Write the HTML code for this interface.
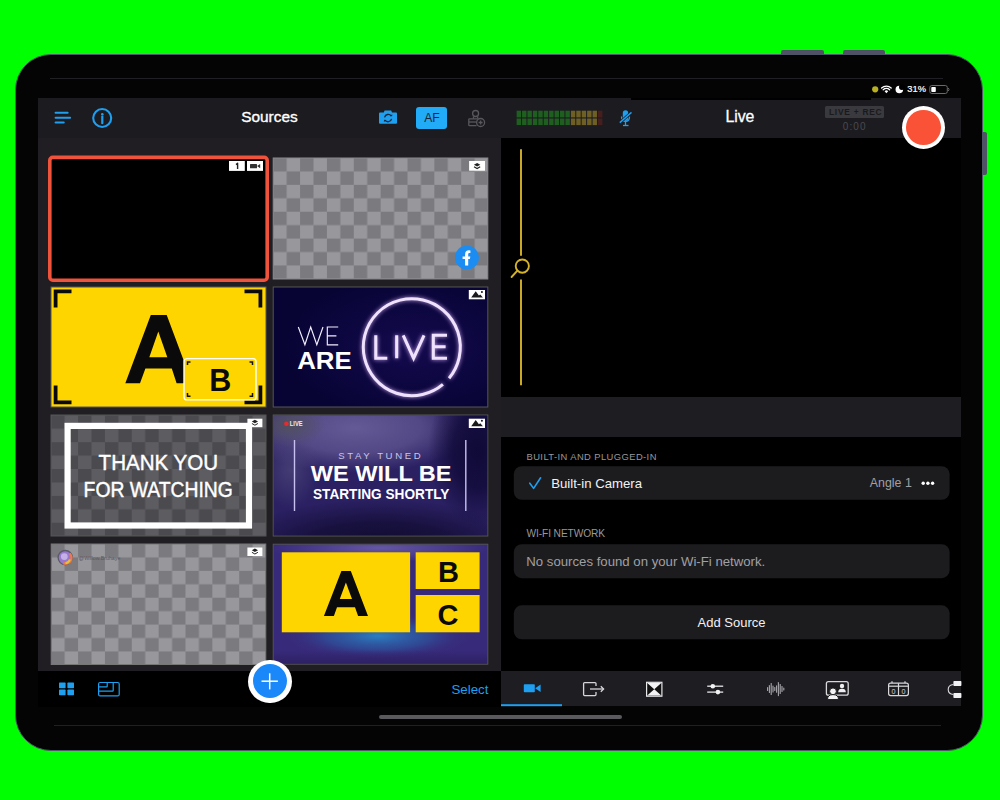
<!DOCTYPE html>
<html><head><meta charset="utf-8">
<style>
*{box-sizing:border-box;margin:0;padding:0}
html,body{width:1000px;height:800px;overflow:hidden;background:#00ff00;font-family:"Liberation Sans",sans-serif}
.a{position:absolute}
#dev{left:15px;top:54px;width:968px;height:697px;border-radius:36px;background:#040404;border:1.7px solid #52566a}
.btn{background:#4e5264}
.scrline{height:1px;background:#202024}
#hdrL{left:38px;top:98px;width:463px;height:40px;background:#1c1b20}
#hdrR{left:501px;top:98px;width:460px;height:40px;background:#1c1b20}
#gridbg{left:38px;top:138px;width:463px;height:533px;background:#201e23}
#tbL{left:38px;top:671px;width:463px;height:36px;background:#000}
#tbR{left:501px;top:671px;width:460px;height:35px;background:#1e1d22}
#prev{left:501px;top:138px;width:460px;height:259px;background:#000}
#band{left:501px;top:397px;width:460px;height:40px;background:#1e1d22}
#list{left:501px;top:437px;width:460px;height:234px;background:#000}
.cell{position:absolute;width:215px;height:121px;overflow:hidden;border:1px solid #555}
.chk{background-color:#7b7b7d;background-image:linear-gradient(45deg,#9a9a9c 25%,transparent 25%,transparent 75%,#9a9a9c 75%),linear-gradient(45deg,#9a9a9c 25%,transparent 25%,transparent 75%,#9a9a9c 75%);background-size:26.8px 26.8px;background-position:0 0,13.4px 13.4px}
.badge{position:absolute;background:#fff;height:9px;border-radius:1px}
.t{position:absolute;white-space:nowrap;line-height:1}
</style></head><body>
<div id="dev" class="a"></div>
<div class="a btn" style="left:781px;top:50px;width:43px;height:5px;border-radius:2px 2px 0 0"></div>
<div class="a btn" style="left:843px;top:50px;width:42px;height:5px;border-radius:2px 2px 0 0"></div>
<div class="a btn" style="left:982px;top:132px;width:5px;height:43px;border-radius:0 2px 2px 0"></div>
<div class="a scrline" style="left:50px;top:78px;width:893px"></div>
<div class="a scrline" style="left:54px;top:725px;width:887px"></div>

<div id="hdrL" class="a"></div>
<div id="hdrR" class="a"></div>
<div id="gridbg" class="a"></div>
<div id="tbL" class="a"></div>
<div id="tbR" class="a"></div>
<div id="prev" class="a"></div>
<div class="a" style="left:631px;top:98px;width:240px;height:1.5px;background:#000"></div>
<div id="band" class="a"></div>
<div id="list" class="a"></div>

<!-- header left -->
<div class="t" style="left:241.2px;top:108.9px;font-size:15.4px;color:#fff;-webkit-text-stroke:0.35px #fff">Sources</div>


<!-- header icons -->
<svg class="a" style="left:48px;top:102px" width="30" height="30" viewBox="48 102 30 30">
<g stroke="#1e9ff0" stroke-width="2.1" stroke-linecap="round">
<line x1="55.6" y1="112.8" x2="67.6" y2="112.8"/><line x1="55.6" y1="117.7" x2="70.1" y2="117.7"/><line x1="55.6" y1="122.5" x2="63.7" y2="122.5"/></g></svg>
<svg class="a" style="left:88px;top:104px" width="28" height="28" viewBox="88 104 28 28">
<circle cx="102.2" cy="118" r="9" fill="none" stroke="#1e9ff0" stroke-width="2.1"/>
<circle cx="102.3" cy="114.2" r="1.3" fill="#1e9ff0"/>
<line x1="102.3" y1="116.6" x2="102.3" y2="123.2" stroke="#1e9ff0" stroke-width="2.2" stroke-linecap="round"/></svg>
<svg class="a" style="left:376px;top:106px" width="24" height="22" viewBox="376 106 24 22">
<path d="M383.8 112.5 L384.6 110.6 L391.2 110.6 L392 112.5 L396 112.5 Q397 112.5 397 113.5 L397 122.8 Q397 123.8 396 123.8 L380 123.8 Q379 123.8 379 122.8 L379 113.5 Q379 112.5 380 112.5 Z" fill="#1e9ff0"/>
<path d="M384.6 117.3 A3.6 3.6 0 0 1 391.2 116.2" fill="none" stroke="#18283a" stroke-width="1.3"/>
<path d="M391.6 118.9 A3.6 3.6 0 0 1 385 120" fill="none" stroke="#18283a" stroke-width="1.3"/>
<path d="M390 115.2 L392 116.6 L392.4 114.4Z" fill="#18283a"/><path d="M386.2 121 L384.2 119.6 L383.8 121.8Z" fill="#18283a"/>
</svg>
<div class="a" style="left:416.3px;top:106.7px;width:31.1px;height:22.5px;border-radius:3px;background:#22abf6"></div>
<div class="t" style="left:424.2px;top:111.9px;font-size:12.2px;color:#1a2636">AF</div>
<svg class="a" style="left:464px;top:106px" width="24" height="24" viewBox="464 106 24 24">
<g fill="none" stroke="#58585c" stroke-width="1.3">
<circle cx="475.6" cy="113.5" r="3"/>
<path d="M473.5 116.5 L473.5 118.8 M477.7 116.5 L477.7 118.8"/>
<path d="M477.5 118.8 L469.5 118.8 Q468.8 118.8 468.8 119.5 L468.8 125 Q468.8 125.6 469.5 125.6 L476.5 125.6"/>
<line x1="469" y1="122" x2="476" y2="122"/>
<circle cx="480.6" cy="122.5" r="4"/>
<path d="M480.6 120.5 L480.6 124.5 M478.6 122.5 L482.6 122.5"/>
</g></svg>
<!-- right header -->
<svg class="a" style="left:0;top:0" width="1000" height="160" viewBox="0 0 1000 160">
<rect x="516.60" y="110.7" width="4.42" height="6.7" fill="#1e5e1e"/><rect x="516.60" y="118.5" width="4.42" height="6.6" fill="#1e5e1e"/><rect x="522.02" y="110.7" width="4.42" height="6.7" fill="#1e5e1e"/><rect x="522.02" y="118.5" width="4.42" height="6.6" fill="#1e5e1e"/><rect x="527.45" y="110.7" width="4.42" height="6.7" fill="#1e5e1e"/><rect x="527.45" y="118.5" width="4.42" height="6.6" fill="#1e5e1e"/><rect x="532.88" y="110.7" width="4.42" height="6.7" fill="#1e5e1e"/><rect x="532.88" y="118.5" width="4.42" height="6.6" fill="#1e5e1e"/><rect x="538.30" y="110.7" width="4.42" height="6.7" fill="#1e5e1e"/><rect x="538.30" y="118.5" width="4.42" height="6.6" fill="#1e5e1e"/><rect x="543.73" y="110.7" width="4.42" height="6.7" fill="#1e5e1e"/><rect x="543.73" y="118.5" width="4.42" height="6.6" fill="#1e5e1e"/><rect x="549.15" y="110.7" width="4.42" height="6.7" fill="#1e5e1e"/><rect x="549.15" y="118.5" width="4.42" height="6.6" fill="#1e5e1e"/><rect x="554.58" y="110.7" width="4.42" height="6.7" fill="#1e5e1e"/><rect x="554.58" y="118.5" width="4.42" height="6.6" fill="#1e5e1e"/><rect x="560.00" y="110.7" width="4.42" height="6.7" fill="#1e5e1e"/><rect x="560.00" y="118.5" width="4.42" height="6.6" fill="#1e5e1e"/><rect x="565.42" y="110.7" width="4.42" height="6.7" fill="#1e5e1e"/><rect x="565.42" y="118.5" width="4.42" height="6.6" fill="#1e5e1e"/><rect x="570.85" y="110.7" width="4.42" height="6.7" fill="#6e6024"/><rect x="570.85" y="118.5" width="4.42" height="6.6" fill="#6e6024"/><rect x="576.27" y="110.7" width="4.42" height="6.7" fill="#6e6024"/><rect x="576.27" y="118.5" width="4.42" height="6.6" fill="#6e6024"/><rect x="581.70" y="110.7" width="4.42" height="6.7" fill="#6e6024"/><rect x="581.70" y="118.5" width="4.42" height="6.6" fill="#6e6024"/><rect x="587.12" y="110.7" width="4.42" height="6.7" fill="#6e6024"/><rect x="587.12" y="118.5" width="4.42" height="6.6" fill="#6e6024"/><rect x="592.55" y="110.7" width="4.42" height="6.7" fill="#6e6024"/><rect x="592.55" y="118.5" width="4.42" height="6.6" fill="#6e6024"/><rect x="597.98" y="110.7" width="4.42" height="6.7" fill="#461e1e"/><rect x="597.98" y="118.5" width="4.42" height="6.6" fill="#461e1e"/>
<g fill="#1e9ff0">
<rect x="622.8" y="110.2" width="5.4" height="10.7" rx="2.7"/>
</g>
<g fill="none" stroke="#1e9ff0" stroke-width="1.3">
<path d="M621.5 116.5 Q621.5 121.5 625.5 121.5 Q629.5 121.5 629.5 116.5"/>
<line x1="625.5" y1="121.5" x2="625.5" y2="125"/>
<line x1="623" y1="125.5" x2="628.5" y2="125.5"/>
<line x1="619.8" y1="122.6" x2="631.5" y2="112.4" stroke-width="2.8" stroke="#1c1b20"/><line x1="619.8" y1="122.6" x2="631.5" y2="112.4" stroke-width="1.4"/>
</g>
<!-- status bar -->
<circle cx="875.2" cy="89.3" r="3.1" fill="#b8b020"/>
<g fill="#fff">
<path d="M886.4 93.2 L884.6 91.2 A2.6 2.6 0 0 1 888.2 91.2 Z"/>
</g>
<g fill="none" stroke="#fff" stroke-width="1.3" stroke-linecap="round">
<path d="M883.2 89.8 A4.6 4.6 0 0 1 889.6 89.8"/>
<path d="M881.6 88 A6.9 6.9 0 0 1 891.2 88"/>
</g>
<circle cx="899.3" cy="89.5" r="3.75" fill="#fff"/><circle cx="901.9" cy="87.1" r="2.9" fill="#000"/>
<rect x="929.8" y="85.5" width="17.5" height="8" rx="2" fill="none" stroke="#6a6a6a" stroke-width="1"/>
<rect x="931.3" y="87" width="4.5" height="5" rx="0.8" fill="#fff"/>
<path d="M948.3 88 Q949.8 89.5 948.3 91" fill="none" stroke="#6a6a6a" stroke-width="1"/>
</svg>
<div class="t" style="left:907.3px;top:85px;font-size:9.3px;color:#fff;-webkit-text-stroke:0.2px #fff">31%</div>
<div class="t" style="left:725.4px;top:109.3px;font-size:15.8px;color:#fff;-webkit-text-stroke:0.3px #fff">Live</div>
<div class="a" style="left:824.6px;top:106px;width:59.6px;height:11.6px;background:#3a393e;border-radius:1.5px"></div>
<div class="t" style="left:829px;top:108.2px;font-size:8.4px;font-weight:bold;color:#19191b;letter-spacing:0.75px">LIVE + REC</div>
<div class="t" style="left:842.8px;top:121.6px;font-size:10px;color:#4a4a4e;letter-spacing:1.1px">0:00</div>
<!-- grid cells -->
<svg class="a" style="left:0;top:0" width="1000" height="800" viewBox="0 0 1000 800">
<defs>
<pattern id="pc2" x="273.2" y="158" width="26.86" height="26.86" patternUnits="userSpaceOnUse"><rect width="26.86" height="26.86" fill="#98979c"/><rect width="13.43" height="13.43" fill="#7b7b7f"/><rect x="13.43" y="13.43" width="13.43" height="13.43" fill="#7b7b7f"/></pattern>
<pattern id="pc7" x="51.2" y="544" width="26.86" height="26.86" patternUnits="userSpaceOnUse"><rect width="26.86" height="26.86" fill="#98979c"/><rect width="13.43" height="13.43" fill="#7b7b7f"/><rect x="13.43" y="13.43" width="13.43" height="13.43" fill="#7b7b7f"/></pattern>
<pattern id="pc5" x="51.2" y="415.3" width="26.86" height="26.86" patternUnits="userSpaceOnUse"><rect width="26.86" height="26.86" fill="#5d5c61"/><rect width="13.43" height="13.43" fill="#4b4a4f"/><rect x="13.43" y="13.43" width="13.43" height="13.43" fill="#4b4a4f"/></pattern>
<radialGradient id="g4" cx="0.65" cy="0.5" r="0.6"><stop offset="0" stop-color="#140a4e"/><stop offset="1" stop-color="#070434"/></radialGradient>
<filter id="glow" x="-30%" y="-30%" width="160%" height="160%"><feGaussianBlur in="SourceGraphic" stdDeviation="2.2" result="b"/><feColorMatrix in="b" type="matrix" values="0 0 0 0 0.75  0 0 0 0 0.45  0 0 0 0 1  0 0 0 0.9 0" result="c"/><feMerge><feMergeNode in="c"/><feMergeNode in="SourceGraphic"/></feMerge></filter>
<clipPath id="c6"><rect x="273.7" y="415.5" width="213.6" height="120"/></clipPath><radialGradient id="g6a"><stop offset="0" stop-color="#645a96"/><stop offset="0.55" stop-color="#5a508c" stop-opacity="0.85"/><stop offset="1" stop-color="#5a508c" stop-opacity="0"/></radialGradient><radialGradient id="g6c"><stop offset="0" stop-color="#100a38"/><stop offset="0.5" stop-color="#100a38" stop-opacity="0.8"/><stop offset="1" stop-color="#100a38" stop-opacity="0"/></radialGradient><radialGradient id="g6e"><stop offset="0" stop-color="#50505e"/><stop offset="1" stop-color="#50505e" stop-opacity="0"/></radialGradient><radialGradient id="g6f"><stop offset="0" stop-color="#4a4478" stop-opacity="0.8"/><stop offset="1" stop-color="#4a4478" stop-opacity="0"/></radialGradient><radialGradient id="g6d"><stop offset="0" stop-color="#100b30"/><stop offset="0.5" stop-color="#100b30" stop-opacity="0.7"/><stop offset="1" stop-color="#100b30" stop-opacity="0"/></radialGradient><linearGradient id="g6" x1="0" y1="0" x2="1" y2="1"><stop offset="0" stop-color="#5e5290"/><stop offset="0.45" stop-color="#4a3c84"/><stop offset="1" stop-color="#120a3a"/></linearGradient>
<radialGradient id="g6b" cx="0.3" cy="0.15" r="0.5"><stop offset="0" stop-color="#6a5c98" stop-opacity="0.9"/><stop offset="1" stop-color="#6a5c98" stop-opacity="0"/></radialGradient>
<clipPath id="c8"><rect x="273.7" y="544.7" width="213.6" height="119"/></clipPath><radialGradient id="g8"><stop offset="0" stop-color="#2a86c8" stop-opacity="0.9"/><stop offset="0.55" stop-color="#2a60a8" stop-opacity="0.55"/><stop offset="1" stop-color="#382a7a" stop-opacity="0"/></radialGradient><radialGradient id="g8t"><stop offset="0" stop-color="#6a5ca8" stop-opacity="0.9"/><stop offset="1" stop-color="#6a5ca8" stop-opacity="0"/></radialGradient><linearGradient id="g8b" x1="0" y1="0" x2="0" y2="1"><stop offset="0" stop-color="#2a1e5e" stop-opacity="0"/><stop offset="1" stop-color="#2a1e5e" stop-opacity="0.8"/></linearGradient>
</defs>
<!-- cell1 -->
<rect x="49.8" y="157.4" width="217.4" height="122.8" rx="3" fill="#000" stroke="#f0533c" stroke-width="3.6"/>
<rect x="229" y="161" width="15.8" height="9.9" fill="#fff"/>
<path d="M237.6 168.9 L237.6 163.3 L236 164.6" fill="none" stroke="#222" stroke-width="1.4" stroke-linejoin="round"/>
<rect x="247" y="161" width="16" height="9.9" fill="#fff"/>
<rect x="250" y="164.1" width="7" height="4.1" rx="0.5" fill="#333"/><path d="M257 166.1 L260.2 164 L260.2 168.2Z" fill="#333"/>
<!-- cell2 -->
<rect x="273.2" y="158" width="214.6" height="121" fill="url(#pc2)" stroke="#8a8a8e" stroke-width="1"/>
<rect x="469.1" y="161" width="15.9" height="9.7" fill="#fff"/>
<path d="M477.1 163 L480.3 164.7 L477.1 166.4 L473.9 164.7Z" fill="#222"/>
<path d="M474 166.8 L477.1 168.6 L480.2 166.8" fill="none" stroke="#222" stroke-width="1.1"/>
<circle cx="466.9" cy="257.6" r="12" fill="#1b8cf2"/>
<path d="M465.1 265.6 L465.1 258.9 L462.6 258.9 L462.6 256.4 L465.1 256.4 L465.1 254.4 Q465.1 250.3 469 250.3 L470.4 250.4 L470.4 252.9 L469.3 252.9 Q468.2 252.9 468.2 254.1 L468.2 256.4 L470.3 256.4 L469.9 258.9 L468.2 258.9 L468.2 265.6 Z" fill="#fff"/>
<!-- cell3 -->
<rect x="51" y="287" width="215" height="120" fill="#ffd500" stroke="#555" stroke-width="1"/>
<g stroke="#0a0a0a" stroke-width="3.8" fill="none">
<path d="M55.6 307.5 L55.6 291.3 L71.5 291.3"/><path d="M244.5 291.3 L260.4 291.3 L260.4 307.5"/>
<path d="M55.6 385.5 L55.6 402.3 L71.5 402.3"/><path d="M244.5 402.3 L260.4 402.3 L260.4 385.5"/>
</g>
<path d="M125.3 383.2 L150.8 314.9 L166.7 314.9 L192.2 383.2 L176.6 383.2 L171.8 368.6 L145.4 368.6 L140 383.2 Z M149.3 357.3 L167.3 357.3 L158.3 331.4 Z" fill="#0a0a0a" fill-rule="evenodd"/>
<rect x="184" y="358.6" width="72" height="41.3" rx="3" fill="#ffd500" stroke="#fff" stroke-width="1.4"/>
<g stroke="#111" stroke-width="1.5" fill="none">
<path d="M187.5 365 L187.5 362 L190.5 362"/><path d="M249.5 362 L252.5 362 L252.5 365"/>
<path d="M187.5 393 L187.5 396.3 L190.5 396.3"/><path d="M249.5 396.3 L252.5 396.3 L252.5 393"/>
</g>
<text x="220.2" y="390.6" font-size="30.5" font-weight="bold" fill="#0a0a0a" text-anchor="middle" font-family="Liberation Sans">B</text>
<!-- cell4 -->
<rect x="273.2" y="287" width="214.6" height="120" fill="url(#g4)" stroke="#555" stroke-width="1"/>
<rect x="468.8" y="290" width="16.2" height="9.3" fill="#fff"/>
<path d="M471.2 297.5 L475.7 291.3 L478.9 295.6 L480.3 294.6 L482.9 297.5 Z" fill="#1a1a1a"/><circle cx="481.9" cy="292.0" r="1.05" fill="#1a1a1a"/>
<g fill="none" stroke="#f4f0ff" stroke-width="1.15" stroke-linejoin="miter">
<path d="M298.3 327 L304.9 344.8 L310.7 327 L316.8 344.8 L323 327"/>
<path d="M338.2 327 L327.3 327 L327.3 344.8 L338.2 344.8 M327.3 335.8 L336.4 335.8"/>
</g>
<text x="297.2" y="368.7" font-size="24" font-weight="bold" fill="#fff" font-family="Liberation Sans" textLength="54.5" lengthAdjust="spacingAndGlyphs">ARE</text>
<g filter="url(#glow)" fill="none" stroke="#efe2ff" stroke-width="3">
<path d="M442.91 384.41 A48.5 48.5 0 1 1 449.06 378.25"/>
<path d="M375.8 335.3 L375.8 358.3 L387.3 358.3 M396.7 335.3 L396.7 358.3 M403.2 335.3 L413.6 358.3 L424 335.3 M447 335.3 L433.3 335.3 L433.3 358.3 L447 358.3 M433.3 346.8 L445.6 346.8" stroke-width="3.1" stroke-linecap="butt"/>
</g>
<!-- cell5 -->
<rect x="51" y="415" width="215" height="121" fill="url(#pc5)" stroke="#555" stroke-width="1"/>
<rect x="67.6" y="425.9" width="181.4" height="99.6" fill="none" stroke="#fff" stroke-width="6.2"/>
<rect x="247.4" y="418.7" width="15" height="8.5" fill="#fff"/>
<path d="M254.9 419.8 L258 421.5 L254.9 423.2 L251.8 421.5Z" fill="#222"/>
<path d="M251.9 423.5 L254.9 425.2 L257.9 423.5" fill="none" stroke="#222" stroke-width="1"/>
<text x="98.6" y="470.3" font-size="22.8" fill="#fff" stroke="#fff" stroke-width="0.45" font-family="Liberation Sans" textLength="119.5" lengthAdjust="spacingAndGlyphs">THANK YOU</text>
<text x="83.6" y="497" font-size="22.8" fill="#fff" stroke="#fff" stroke-width="0.45" font-family="Liberation Sans" textLength="149.2" lengthAdjust="spacingAndGlyphs">FOR WATCHING</text>
<!-- cell6 -->
<rect x="273.2" y="415" width="214.6" height="121" fill="#2a2062" stroke="#555" stroke-width="1"/>
<g clip-path="url(#c6)">
<ellipse cx="355" cy="428" rx="120" ry="45" fill="url(#g6a)"/>
<ellipse cx="290" cy="425" rx="35" ry="22" fill="url(#g6e)"/>
<ellipse cx="290" cy="470" rx="30" ry="40" fill="url(#g6f)"/>
<ellipse cx="478" cy="450" rx="50" ry="75" fill="url(#g6c)"/>
<ellipse cx="380" cy="545" rx="150" ry="45" fill="url(#g6d)"/>
</g>
<circle cx="286.4" cy="423.8" r="2.3" fill="#e82a2a"/>
<text x="289.8" y="425.9" font-size="6.4" font-weight="bold" fill="#eee" font-family="Liberation Sans" textLength="12.8" lengthAdjust="spacingAndGlyphs">LIVE</text>
<rect x="468.8" y="418.7" width="16.2" height="9.3" fill="#fff"/>
<path d="M471.2 426.2 L475.7 420.0 L478.9 424.3 L480.3 423.3 L482.9 426.2 Z" fill="#1a1a1a"/><circle cx="481.9" cy="420.7" r="1.05" fill="#1a1a1a"/>
<line x1="294.5" y1="440" x2="294.5" y2="511" stroke="#c8c0f0" stroke-width="1.4"/>
<line x1="465.8" y1="440" x2="465.8" y2="511" stroke="#c8c0f0" stroke-width="1.4"/>
<text x="380.7" y="459.4" font-size="9.6" fill="#cbc4e6" text-anchor="middle" font-family="Liberation Sans" letter-spacing="2.6">STAY TUNED</text>
<text x="381.2" y="480.8" font-size="21.4" font-weight="bold" fill="#fff" text-anchor="middle" font-family="Liberation Sans" transform="translate(381.2 0) scale(1.1 1) translate(-381.2 0)">WE WILL BE</text>
<text x="381.2" y="499.2" font-size="15" font-weight="bold" fill="#fff" text-anchor="middle" font-family="Liberation Sans" transform="translate(381.2 0) scale(0.91 1) translate(-381.2 0)">STARTING SHORTLY</text>
<!-- cell7 -->
<rect x="51.2" y="544" width="214.6" height="120.5" fill="url(#pc7)" stroke="#777" stroke-width="1"/>
<rect x="247.4" y="547.5" width="15" height="8.5" fill="#fff"/>
<path d="M254.9 548.6 L258 550.3 L254.9 552 L251.8 550.3Z" fill="#222"/>
<path d="M251.9 552.3 L254.9 554 L257.9 552.3" fill="none" stroke="#222" stroke-width="1"/>
<circle cx="65.2" cy="557.6" r="7.1" fill="#9878cc" stroke="#5c5a68" stroke-width="1.3"/>
<path d="M69.6 553.6 A5.8 5.8 0 0 1 63.4 563.2" fill="none" stroke="#f07a48" stroke-width="2.4"/>
<path d="M69.9 559.5 A5.6 5.6 0 0 1 65.5 563.3" fill="none" stroke="#e8c040" stroke-width="2"/>
<circle cx="64.3" cy="556.6" r="3.4" fill="#c4b0e4"/>
<text x="78.8" y="560" font-size="5.8" fill="#58565e" font-family="Liberation Sans" textLength="41.6" lengthAdjust="spacingAndGlyphs">@Willow.Bruhaye</text>
<!-- cell8 -->
<rect x="273.2" y="544.2" width="214.6" height="120" fill="#382a7a" stroke="#555" stroke-width="1"/>
<g clip-path="url(#c8)"><ellipse cx="380" cy="548" rx="110" ry="14" fill="url(#g8t)"/><ellipse cx="378" cy="636" rx="95" ry="24" fill="url(#g8)"/><rect x="273.7" y="650" width="213.6" height="14" fill="url(#g8b)"/></g>
<rect x="281.8" y="552.3" width="128.3" height="80" fill="#ffd500"/>
<rect x="415.7" y="552.3" width="63.9" height="36.7" fill="#ffd500"/>
<rect x="415.7" y="595" width="63.9" height="37.3" fill="#ffd500"/>
<path d="M323.9 616.1 L341.4 571 L350.8 571 L368 616.1 L358.1 616.1 L355 607.2 L337 607.2 L333.9 616.1 Z M339.8 598.9 L352 598.9 L345.9 582.4 Z" fill="#0a0a0a" fill-rule="evenodd"/>
<text x="448.4" y="582.2" font-size="29" font-weight="bold" fill="#0a0a0a" text-anchor="middle" font-family="Liberation Sans">B</text>
<text x="448" y="624.8" font-size="29" font-weight="bold" fill="#0a0a0a" text-anchor="middle" font-family="Liberation Sans">C</text>
</svg>
<!-- right panel content -->
<svg class="a" style="left:0;top:0" width="1000" height="800" viewBox="0 0 1000 800">
<g stroke="#d4b22a" fill="none" stroke-width="1.9">
<line x1="521" y1="149.2" x2="521" y2="255.8"/>
<line x1="521" y1="279.5" x2="521" y2="385.2"/>
<circle cx="522.3" cy="266.1" r="6.6"/>
<line x1="517.4" y1="270.7" x2="511.6" y2="277" stroke-linecap="round"/>
</g>
<rect x="513.8" y="466.2" width="435.8" height="33.6" rx="8" fill="#1c1c1f"/>
<rect x="513.8" y="544.2" width="435.8" height="34" rx="8" fill="#1c1c1f"/>
<rect x="513.8" y="605.3" width="435.8" height="34" rx="8" fill="#1c1c1f"/>
<path d="M529.8 483.2 L533.6 488.4 L540.6 477.8" fill="none" stroke="#1e9ff0" stroke-width="1.6" stroke-linecap="round" stroke-linejoin="round"/>
<circle cx="923.2" cy="483.3" r="1.7" fill="#fff"/><circle cx="927.9" cy="483.3" r="1.7" fill="#fff"/><circle cx="932.6" cy="483.3" r="1.7" fill="#fff"/>
<!-- toolbar -->
<rect x="501" y="704.2" width="61" height="2" fill="#1e9ff0"/>
<rect x="523.8" y="684.2" width="11" height="8" rx="0.8" fill="#1e9ff0"/>
<path d="M535.2 688.2 L540.6 684.4 L540.6 692Z" fill="#1e9ff0"/>
<g fill="none" stroke="#d6d6d8" stroke-width="1.3">
<path d="M596 686 L596 683.6 Q596 682.6 595 682.6 L584.6 682.6 Q583.6 682.6 583.6 683.6 L583.6 694.6 Q583.6 695.6 584.6 695.6 L595 695.6 Q596 695.6 596 694.6 L596 692"/>
<line x1="590" y1="689" x2="603.5" y2="689"/>
<path d="M600.8 686.2 L603.6 689 L600.8 691.8"/>
</g>
<rect x="646.6" y="682.3" width="15.3" height="13.9" fill="#111" stroke="#e8e8ea" stroke-width="1.2"/>
<path d="M647.2 682.9 L661.3 682.9 L654.25 689.25 Z M647.2 695.6 L661.3 695.6 L654.25 689.25Z" fill="#f2f2f4"/>
<g stroke="#e8e8ea" stroke-width="1.3">
<line x1="707.2" y1="686.2" x2="723.2" y2="686.2"/><line x1="707.2" y1="692.1" x2="723.2" y2="692.1"/>
</g>
<circle cx="712.8" cy="686.2" r="2.3" fill="#f2f2f4"/><circle cx="717.9" cy="692.1" r="2.3" fill="#f2f2f4"/>
<g stroke="#a8a8ac" stroke-width="1.1" stroke-linecap="round">
<line x1="767.6" y1="687.5" x2="767.6" y2="690.5"/>
<line x1="769.4" y1="685.5" x2="769.4" y2="692.5"/>
<line x1="771.2" y1="683.5" x2="771.2" y2="694.5"/>
<line x1="773" y1="686" x2="773" y2="692"/>
<line x1="774.8" y1="687.5" x2="774.8" y2="690.5"/>
<line x1="776.6" y1="685.8" x2="776.6" y2="692.2"/>
<line x1="778.4" y1="682.6" x2="778.4" y2="695.6"/>
<line x1="780.2" y1="684.5" x2="780.2" y2="693.5"/>
<line x1="782" y1="686.5" x2="782" y2="691.5"/>
<line x1="783.8" y1="688" x2="783.8" y2="690"/>
</g>
<rect x="826.4" y="681.6" width="21.8" height="13.6" rx="2" fill="none" stroke="#d8d8da" stroke-width="1.3"/>
<circle cx="842" cy="686" r="2.2" fill="#eee"/><path d="M838.2 692.2 Q838.2 688.8 842 688.8 Q845.8 688.8 845.8 692.2Z" fill="#eee"/>
<circle cx="833" cy="691.3" r="3.4" fill="#f4f4f6" stroke="#1c1c1e" stroke-width="1"/>
<path d="M827.5 699.6 Q827.5 694.6 833 694.6 Q838.5 694.6 838.5 699.6Z" fill="#f4f4f6" stroke="#1c1c1e" stroke-width="1"/>
<g fill="none" stroke="#d8d8da" stroke-width="1.2">
<rect x="888.6" y="683.2" width="19.8" height="12.4" rx="2"/>
<line x1="898.5" y1="683.2" x2="898.5" y2="695.6"/>
<line x1="888.6" y1="686.2" x2="908.4" y2="686.2"/>
<path d="M892 683 L892 681.3 M905 683 L905 681.3"/>
</g>
<text x="893.6" y="694.2" font-size="7.2" fill="#d8d8da" text-anchor="middle" font-family="Liberation Sans">0</text>
<text x="903.4" y="694.2" font-size="7.2" fill="#d8d8da" text-anchor="middle" font-family="Liberation Sans">0</text>
<rect x="953.4" y="681" width="8" height="5" rx="0.8" fill="#f2f2f4"/>
<rect x="953.4" y="693" width="8" height="5" rx="0.8" fill="#f2f2f4"/>
<path d="M953.4 684.5 Q948.2 685 948.2 689.5 Q948.2 694 953.4 694.5" fill="none" stroke="#d8d8da" stroke-width="1.1"/>
<!-- left toolbar -->
<rect x="59" y="682.6" width="6.6" height="5.6" rx="0.6" fill="#1e9ff0"/><rect x="67.4" y="682.6" width="6.6" height="5.6" rx="0.6" fill="#1e9ff0"/>
<rect x="59" y="689.6" width="6.6" height="5.6" rx="0.6" fill="#1e9ff0"/><rect x="67.4" y="689.6" width="6.6" height="5.6" rx="0.6" fill="#1e9ff0"/>
<g fill="none" stroke="#1e9ff0" stroke-width="1.2">
<rect x="98.6" y="682.5" width="20.6" height="13.4" rx="1.5"/>
<path d="M98.6 686.8 L106.6 686.8 Q107.2 686.8 107.2 686.2 L107.2 682.4 M98.6 691.2 L112.6 691.2 Q113.2 691.2 113.2 690.6 L113.2 682.4"/>
</g>
</svg>
<div class="t" style="left:526.5px;top:451.9px;font-size:9.4px;letter-spacing:0.42px;color:#98989c">BUILT-IN AND PLUGGED-IN</div>
<div class="t" style="left:526.5px;top:528.6px;font-size:10.2px;letter-spacing:-0.1px;color:#98989c">WI-FI NETWORK</div>
<div class="t" style="left:551.2px;top:477.2px;font-size:13.2px;color:#f2f2f4">Built-in Camera</div>
<div class="t" style="left:869.8px;top:477.3px;font-size:12.4px;color:#a0a0a4">Angle 1</div>
<div class="t" style="left:526.3px;top:555px;font-size:13.2px;color:#a0a0a4">No sources found on your Wi-Fi network.</div>
<div class="t" style="left:697.6px;top:615.9px;font-size:13px;color:#f2f2f4">Add Source</div>
<div class="t" style="left:451.5px;top:682.7px;font-size:13.3px;color:#1e9ff0">Select</div>
<!-- record button -->
<div class="a" style="left:901.75px;top:105.65px;width:43.5px;height:43.5px;border-radius:50%;background:#fff"></div>
<div class="a" style="left:906.2px;top:110.1px;width:34.6px;height:34.6px;border-radius:50%;background:#fa5236"></div>
<!-- plus button -->
<div class="a" style="left:248px;top:659.5px;width:43.6px;height:43.6px;border-radius:50%;background:#fff"></div>
<div class="a" style="left:252.6px;top:664.1px;width:34.4px;height:34.4px;border-radius:50%;background:#1a88f8"></div>

<svg class="a" style="left:250px;top:662px" width="40" height="40" viewBox="250 662 40 40"><g stroke="#fff" stroke-width="1.5"><line x1="269.7" y1="673.3" x2="269.7" y2="689.4"/><line x1="261.5" y1="681.2" x2="277.9" y2="681.2"/></g></svg>
<!-- home indicator -->
<div class="a" style="left:379px;top:715px;width:243px;height:4px;border-radius:2px;background:#5a5a5e"></div>
</body></html>
